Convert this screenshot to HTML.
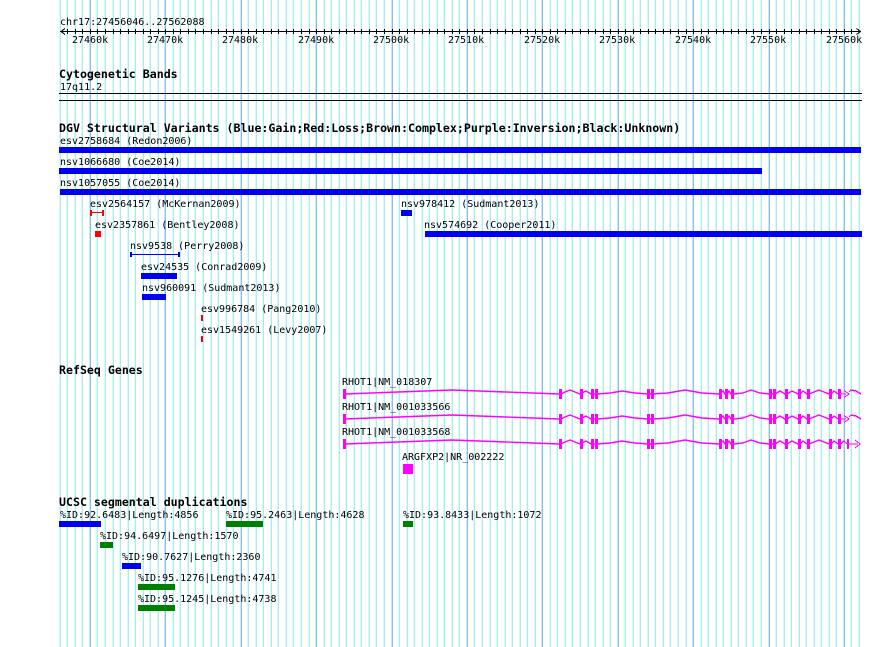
<!DOCTYPE html>
<html><head><meta charset="utf-8"><style>
html,body{margin:0;padding:0;background:#fff;width:890px;height:647px;overflow:hidden}
svg{display:block}
text{font-family:"DejaVu Sans Mono","Liberation Mono",monospace;font-size:10px;fill:#000;white-space:pre}
text.b{font-weight:bold;font-size:11.6px}
</style></head><body>
<svg width="890" height="647" viewBox="0 0 890 647" xmlns="http://www.w3.org/2000/svg">
<defs>
<g id="ln"><path d="M60.5 0V647M67.5 0V647M75.5 0V647M82.5 0V647M97.5 0V647M105.5 0V647M113.5 0V647M120.5 0V647M128.5 0V647M135.5 0V647M143.5 0V647M150.5 0V647M158.5 0V647M173.5 0V647M180.5 0V647M188.5 0V647M195.5 0V647M203.5 0V647M211.5 0V647M218.5 0V647M226.5 0V647M233.5 0V647M248.5 0V647M256.5 0V647M263.5 0V647M271.5 0V647M278.5 0V647M286.5 0V647M293.5 0V647M301.5 0V647M309.5 0V647M324.5 0V647M331.5 0V647M339.5 0V647M346.5 0V647M354.5 0V647M361.5 0V647M369.5 0V647M376.5 0V647M384.5 0V647M399.5 0V647M407.5 0V647M414.5 0V647M422.5 0V647M429.5 0V647M437.5 0V647M444.5 0V647M452.5 0V647M459.5 0V647M474.5 0V647M482.5 0V647M490.5 0V647M497.5 0V647M505.5 0V647M512.5 0V647M520.5 0V647M527.5 0V647M535.5 0V647M550.5 0V647M557.5 0V647M565.5 0V647M572.5 0V647M580.5 0V647M588.5 0V647M595.5 0V647M603.5 0V647M610.5 0V647M625.5 0V647M633.5 0V647M640.5 0V647M648.5 0V647M655.5 0V647M663.5 0V647M670.5 0V647M678.5 0V647M686.5 0V647M701.5 0V647M708.5 0V647M716.5 0V647M723.5 0V647M731.5 0V647M738.5 0V647M746.5 0V647M753.5 0V647M761.5 0V647M776.5 0V647M784.5 0V647M791.5 0V647M799.5 0V647M806.5 0V647M814.5 0V647M821.5 0V647M829.5 0V647M836.5 0V647M851.5 0V647M859.5 0V647"/></g>
<g id="mj"><path d="M90.5 0V647M165.5 0V647M241.5 0V647M316.5 0V647M392.5 0V647M467.5 0V647M542.5 0V647M618.5 0V647M693.5 0V647M769.5 0V647M844.5 0V647"/></g>
<g id="gene">
<polyline fill="none" stroke="#f0f" stroke-width="1.4" points="345,394 371,393 398,392 425,391 452,390 479,391 506,392 533,393 559,394"/>
<polyline fill="none" stroke="#f0f" stroke-width="1.4" points="561,394 565,392 570,390 575,392 580,394 586,391 591,394 597,394 610,393 622,391 635,393 648,394 652,394 668,393 685,390 702,393 719,394 723,391 725,394 727,394 729,391 731,394 734,394 743,393 751,390 760,393 769,394 775,394 780,391 785,394 787,394 792,391 798,394 800,394 803,391 807,394 809,394 814,392 819,390 824,392 829,394 831,394 834,391 838,394"/>
<path shape-rendering="crispEdges" fill="#f0f" d="M343 389h3v10h-3zM559 389h3v10h-3zM580 389h3v10h-3zM591 389h3v10h-3zM595 389h3v10h-3zM647 389h3v10h-3zM651 389h3v10h-3zM719 389h3v10h-3zM725 389h3v10h-3zM731 389h3v10h-3zM769 389h3v10h-3zM773 389h3v10h-3zM785 389h3v10h-3zM798 389h3v10h-3zM807 389h3v10h-3zM829 389h3v10h-3zM838 389h3v10h-3z"/>
</g>
</defs>
<g transform="translate(-0.2 0)" stroke-width="1.4">
<use href="#ln" stroke="#a8eeee"/>
<use href="#mj" stroke="#80c4ee"/>
</g>
<g shape-rendering="crispEdges">
<path d="M60 31.5H861" stroke="#000"/>
<path stroke="#000" d="M67.5 29V34M75.5 29V34M82.5 29V34M90.5 29V34M97.5 29V34M105.5 29V34M113.5 29V34M120.5 29V34M128.5 29V34M135.5 29V34M143.5 29V34M150.5 29V34M158.5 29V34M165.5 29V34M173.5 29V34M180.5 29V34M188.5 29V34M195.5 29V34M203.5 29V34M211.5 29V34M218.5 29V34M226.5 29V34M233.5 29V34M241.5 29V34M248.5 29V34M256.5 29V34M263.5 29V34M271.5 29V34M278.5 29V34M286.5 29V34M293.5 29V34M301.5 29V34M309.5 29V34M316.5 29V34M324.5 29V34M331.5 29V34M339.5 29V34M346.5 29V34M354.5 29V34M361.5 29V34M369.5 29V34M376.5 29V34M384.5 29V34M392.5 29V34M399.5 29V34M407.5 29V34M414.5 29V34M422.5 29V34M429.5 29V34M437.5 29V34M444.5 29V34M452.5 29V34M459.5 29V34M467.5 29V34M474.5 29V34M482.5 29V34M490.5 29V34M497.5 29V34M505.5 29V34M512.5 29V34M520.5 29V34M527.5 29V34M535.5 29V34M542.5 29V34M550.5 29V34M557.5 29V34M565.5 29V34M572.5 29V34M580.5 29V34M588.5 29V34M595.5 29V34M603.5 29V34M610.5 29V34M618.5 29V34M625.5 29V34M633.5 29V34M640.5 29V34M648.5 29V34M655.5 29V34M663.5 29V34M670.5 29V34M678.5 29V34M686.5 29V34M693.5 29V34M701.5 29V34M708.5 29V34M716.5 29V34M723.5 29V34M731.5 29V34M738.5 29V34M746.5 29V34M753.5 29V34M761.5 29V34M769.5 29V34M776.5 29V34M784.5 29V34M791.5 29V34M799.5 29V34M806.5 29V34M814.5 29V34M821.5 29V34M829.5 29V34M836.5 29V34M844.5 29V34M851.5 29V34"/>
<path fill="none" stroke="#000" d="M65 28.5L61 31.5L65 34.5M856.5 28.5L860.5 31.5L856.5 34.5"/>
<rect x="59" y="93" width="803" height="1" fill="#000"/>
<rect x="59" y="100" width="803" height="1" fill="#000"/>
<g fill="#0000f0">
<rect x="59" y="147" width="802" height="6"/>
<rect x="59" y="168" width="703" height="6"/>
<rect x="60" y="189" width="801" height="6"/>
<rect x="401" y="210" width="11" height="6"/>
<rect x="425" y="231" width="437" height="6"/>
<rect x="141" y="273" width="36" height="6"/>
<rect x="142" y="294" width="24" height="6"/>
<rect x="130" y="254" width="50" height="1"/>
<rect x="130" y="252" width="2" height="5"/>
<rect x="178" y="252" width="2" height="5"/>
<rect x="59" y="521" width="42" height="6"/>
<rect x="122" y="563" width="19" height="6"/>
</g>
<g fill="#f00">
<rect x="90" y="212" width="14" height="1"/>
<rect x="90" y="210" width="2" height="6"/>
<rect x="102" y="210" width="2" height="6"/>
<rect x="95" y="231" width="6" height="6"/>
<rect x="201" y="315" width="2" height="6"/>
<rect x="201" y="336" width="2" height="6"/>
</g>
<g fill="#008000">
<rect x="226" y="521" width="37" height="6"/>
<rect x="403" y="521" width="10" height="6"/>
<rect x="100" y="542" width="13" height="6"/>
<rect x="138" y="584" width="37" height="6"/>
<rect x="138" y="605" width="37" height="6"/>
</g>
</g>
<use href="#gene"/>
<use href="#gene" y="25"/>
<use href="#gene" y="50"/>
<g shape-rendering="crispEdges">
<path fill="none" stroke="#f0f" stroke-width="1.4" d="M841 394H846M841 419H846M849 392L851 390L856 391L861 394M849 417L851 415L856 416L861 419M841 444L844 441L847 444M849 444H858"/>
<path fill="none" stroke="#f0f" d="M844 390.5L849 394L844 397.5M844 415.5L849 419L844 422.5M855 440L860 444L855 448"/>
<rect x="847" y="439" width="2" height="10" fill="#f0f"/>
<rect x="403" y="464" width="10" height="10" fill="#f0f"/>
</g>
<text x="60" y="25">chr17:27456046..27562088</text>
<text x="72" y="43">27460k</text><text x="147" y="43">27470k</text><text x="222" y="43">27480k</text><text x="298" y="43">27490k</text><text x="373" y="43">27500k</text><text x="448" y="43">27510k</text><text x="524" y="43">27520k</text><text x="599" y="43">27530k</text><text x="675" y="43">27540k</text><text x="750" y="43">27550k</text><text x="826" y="43">27560k</text>
<text class="b" x="59" y="78">Cytogenetic Bands</text>
<text x="60" y="90">17q11.2</text>
<text class="b" x="59" y="132">DGV Structural Variants (Blue:Gain;Red:Loss;Brown:Complex;Purple:Inversion;Black:Unknown)</text>
<text x="60" y="144">esv2758684 (Redon2006)</text>
<text x="60" y="165">nsv1066680 (Coe2014)</text>
<text x="60" y="186">nsv1057055 (Coe2014)</text>
<text x="90" y="207">esv2564157 (McKernan2009)</text>
<text x="401" y="207">nsv978412 (Sudmant2013)</text>
<text x="95" y="228">esv2357861 (Bentley2008)</text>
<text x="424" y="228">nsv574692 (Cooper2011)</text>
<text x="130" y="249">nsv9538 (Perry2008)</text>
<text x="141" y="270">esv24535 (Conrad2009)</text>
<text x="142" y="291">nsv960091 (Sudmant2013)</text>
<text x="201" y="312">esv996784 (Pang2010)</text>
<text x="201" y="333">esv1549261 (Levy2007)</text>
<text class="b" x="59" y="374">RefSeq Genes</text>
<text x="342" y="385">RHOT1|NM_018307</text>
<text x="342" y="410">RHOT1|NM_001033566</text>
<text x="342" y="435">RHOT1|NM_001033568</text>
<text x="402" y="460">ARGFXP2|NR_002222</text>
<text class="b" x="59" y="506">UCSC segmental duplications</text>
<text x="60" y="518">%ID:92.6483|Length:4856</text>
<text x="226" y="518">%ID:95.2463|Length:4628</text>
<text x="403" y="518">%ID:93.8433|Length:1072</text>
<text x="100" y="539">%ID:94.6497|Length:1570</text>
<text x="122" y="560">%ID:90.7627|Length:2360</text>
<text x="138" y="581">%ID:95.1276|Length:4741</text>
<text x="138" y="602">%ID:95.1245|Length:4738</text>
</svg>
</body></html>
